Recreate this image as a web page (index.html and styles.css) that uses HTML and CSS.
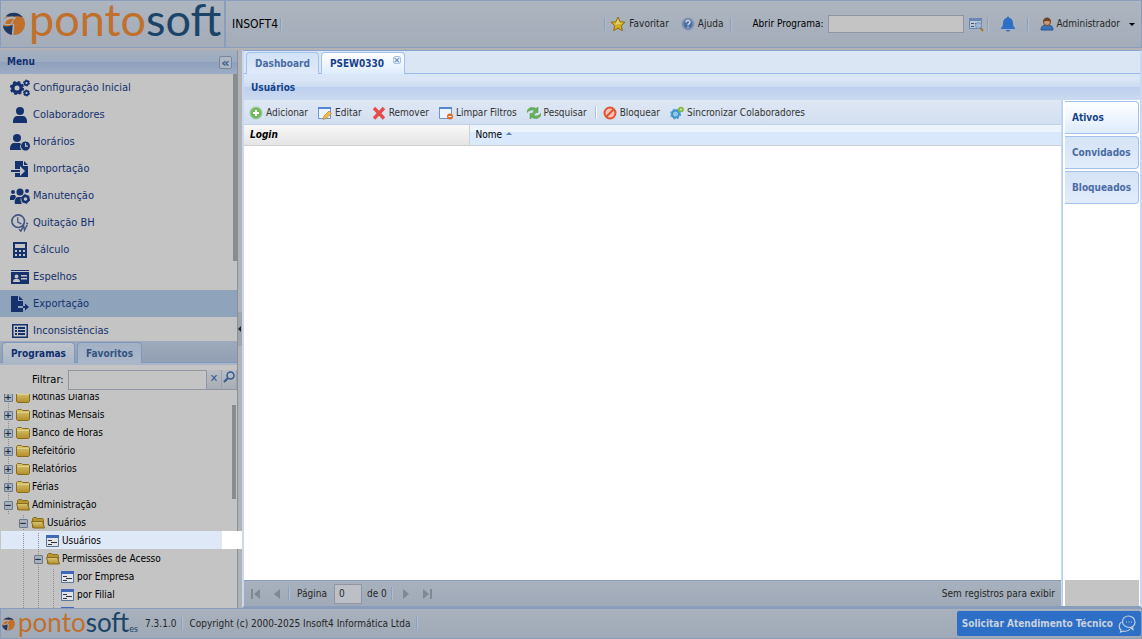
FILE: index.html
```html
<!DOCTYPE html>
<html lang="pt-BR">

<head>
    <meta charset="UTF-8">
    <meta name="viewport" content="width=device-width, initial-scale=1.0">
    <title>Pontosoft</title>
    <link rel="stylesheet" href="styles.css">
</head>

<body>
    <!-- icons -->
    <svg class="sprite" aria-hidden="true">
        <defs>
            <linearGradient id="gold" x1="0" y1="0" x2="0" y2="1">
                <stop offset="0" stop-color="#d9c873" />
                <stop offset="1" stop-color="#b38d2b" />
            </linearGradient>
        </defs>
        <symbol id="i-globe" viewBox="0 0 24 24">
            <circle cx="12" cy="12" r="11" fill="#c0702b" />
            <path d="M4 4A11 11 0 0 1 21 5.500C15 2.500 9 6 4 4z" fill="#1f3866" />
            <path d="M1 14c4 1 7 0 10-1 0 4-1 7-1 10C5 22 1.500 18 1 14z" fill="#1f3866" />
            <path d="M1.500 8c4-4 8-4 13-2.500-3 2-4 4-4 7-4 1-6 1-9.500 0z" fill="#a9b2be" />
            <path d="M4 9c3-2 5-2.500 8-2-2 1.500-2.500 3-2.500 4.500-2 .6-4 .6-6.500.3z" fill="#c0702b" />
            <path d="M11.500 12c0 4-.5 7-1 11" fill="none" stroke="#a9b2be" stroke-width="1.500" />
        </symbol>
        <symbol id="i-star" viewBox="0 0 16 16">
            <path d="M8 1l2.100 4.700 5 .5-3.800 3.400 1.100 5L8 12.200l-4.400 2.400 1.100-5L.9 6.200l5-.5z" fill="#d2ae22" stroke="#8f6f14" />
            <path d="M8 3l1.300 3.500 3 .4L5 9z" fill="#e4d06a" />
        </symbol>
        <symbol id="i-help" viewBox="0 0 14 14">
            <circle cx="7" cy="7" r="5.500" fill="#496d9f" stroke="#8094b4" stroke-width="2" />
            <path d="M5 5.500C5 3 9 3 9 5.300 9 6.600 7 6.500 7 8.200M7 9.500v1.300" fill="none" stroke="#d0d8e4" stroke-width="1.500" />
        </symbol>
        <symbol id="i-find" viewBox="0 0 16 16">
            <path d="M1.500 2.500h12v10h-12z" fill="#bdc7d4" stroke="#6a86b4" />
            <path d="M1 2h13v3H1z" fill="#6a86b4" />
            <path d="M3 7.500h3M3 10.500h3M7 7.500h5" stroke="#47536b" />
            <circle cx="10.500" cy="9.500" r="3" fill="#9db8d6" stroke="#7b92b5" />
            <path d="M12.500 12l2.500 3" stroke="#a6753a" stroke-width="2" />
        </symbol>
        <symbol id="i-bell" viewBox="0 0 14 16">
            <path d="M7 .5c.8 0 1 .7 1 1.300C10.800 2.400 12 4.500 12 7c0 3 1 4 2 5v1H0v-1c1-1 2-2 2-5 0-2.500 1.200-4.600 4-5.200C6 1.200 6.200.5 7 .5zM5 14h4c0 2-4 2-4 0z" fill="#2d6fc6" />
        </symbol>
        <symbol id="i-user" viewBox="0 0 14 14">
            <path d="M1 13c0-4 2-5 6-5s6 1 6 5z" fill="#3b71b8" stroke="#2a5592" />
            <circle cx="7" cy="5" r="3.500" fill="#c99a75" stroke="#7c4d26" />
            <path d="M3 5c0-6 8-6 8 0-2-1.500-6-1.500-8 0z" fill="#6f431e" />
        </symbol>
        <symbol id="m-cogs" viewBox="0 0 20 18">
            <circle cx="7" cy="9" r="4.200" fill="none" stroke="currentColor" stroke-width="3.400" />
            <circle cx="7" cy="9" r="6" fill="none" stroke="currentColor" stroke-width="2.200" stroke-dasharray="2.700 2" />
            <circle cx="16.500" cy="4" r="2" fill="none" stroke="currentColor" stroke-width="1.800" />
            <circle cx="16.500" cy="4" r="3" fill="none" stroke="currentColor" stroke-width="1" stroke-dasharray="1.600 1.540" />
            <circle cx="16.500" cy="14" r="2" fill="none" stroke="currentColor" stroke-width="1.800" />
            <circle cx="16.500" cy="14" r="3" fill="none" stroke="currentColor" stroke-width="1" stroke-dasharray="1.600 1.540" />
        </symbol>
        <symbol id="m-person" viewBox="0 0 20 18">
            <circle cx="10" cy="5" r="4" />
            <path d="M3 17v-2c0-3 2-5 4-5h6c2 0 4 2 4 5v2z" />
        </symbol>
        <symbol id="m-clock" viewBox="0 0 20 18">
            <circle cx="7" cy="5" r="4" />
            <path d="M0 17v-2c0-3 2-5 4-5h6l1 1c-1.500 2-1 4.500.5 6z" />
            <path fill-rule="evenodd" d="M15.500 8.500a4.500 4.500 0 1 0 .01 0zM15 10h1.200v2.500H18v1.300h-3z" />
        </symbol>
        <symbol id="m-import" viewBox="0 0 20 18">
            <path d="M5 1h8v5h5v11H5v-4h5v3l5-5-5-5v3H5zM14 1l4 4h-4z" />
            <path d="M1 10h9v2H1z" />
        </symbol>
        <symbol id="m-group" viewBox="0 0 20 18">
            <circle cx="3" cy="5" r="2" />
            <circle cx="10" cy="5" r="3.500" />
            <circle cx="17" cy="4" r="2" />
            <path d="M0 11c0-2 1-3 2-3h3l1 2-2 3H0zM5 17c-1-4 1-7 3-7h3c-1 3 0 6 1 7z" />
            <circle cx="15.500" cy="12" r="3" fill="none" stroke="currentColor" stroke-width="2.400" />
            <circle cx="15.500" cy="12" r="4.300" fill="none" stroke="currentColor" stroke-dasharray="2 2.500" />
        </symbol>
        <symbol id="m-history" viewBox="0 0 20 20">
            <g fill="none" stroke="currentColor" opacity=".75">
                <circle cx="8" cy="8" r="7" stroke-width="1.800" />
                <path d="M7.500 3.500V9l4 2" stroke-width="1.400" />
                <path d="M9 17l2 2 3-6 1 5 3-6M17 10l2 1" stroke-width="1.600" />
            </g>
        </symbol>
        <symbol id="m-calc" viewBox="0 0 20 18">
            <path fill-rule="evenodd" d="M3 1h14v16H3zM5 3v4h10V3zM5 9v2h2V9zM9 9v2h2V9zM13 9v2h2V9zM5 13v2h2v-2zM9 13v2h2v-2zM13 13v2h2v-2z" />
        </symbol>
        <symbol id="m-card" viewBox="0 0 20 18">
            <path fill-rule="evenodd" d="M1 2h18v1H1zM1 4h18v12H1zM11 7v1.500h6V7zM11 10v1.500h6V10zM3 14h7c0-2-1-3-2-3H5c-1 0-2 1-2 3zM6.500 6.500a2 2 0 1 0 .01 0z" />
        </symbol>
        <symbol id="m-export" viewBox="0 0 20 18">
            <path d="M1 1h7v5h5v5H8v2h5v4H1zM9 1l4 4H9zM13 11h2V8.500l4 3.500-4 3.500V13h-2z" />
        </symbol>
        <symbol id="m-list" viewBox="0 0 20 18">
            <path fill-rule="evenodd" d="M2 2h16v14H2zM3.500 3.500v11h13v-11zM5 5h2v2H5zM8 5h7v2H8zM5 8h2v2H5zM8 8h7v2H8zM5 11h2v2H5zM8 11h7v2H8z" />
        </symbol>
        <symbol id="t-folder" viewBox="0 0 14 14">
            <path d="M.5 2.500l1-1h4l1 1h6l1 1v8l-1 1h-11l-1-1z" fill="url(#gold)" stroke="#8a6c1d" />
            <path d="M1 4.500h12" stroke="#ded18c" />
        </symbol>
        <symbol id="t-open" viewBox="0 0 14 14">
            <path d="M1.500 2.500l1-1h3l1 1h5l1 1v8h-11z" fill="#b8962f" stroke="#8a6c1d" />
            <path d="M.5 5.500h11l2 6.500h-11z" fill="url(#gold)" stroke="#8a6c1d" />
        </symbol>
        <symbol id="t-form" viewBox="0 0 14 14">
            <path d="M.5 1.500h12v11H.5z" fill="#dfe4ec" stroke="#5d7397" />
            <path d="M0 1h13v3H0z" fill="#3f68b5" />
            <path d="M2 6.500h4M2 10.500h4M5 8.500h6" stroke="#333" />
        </symbol>
        <symbol id="b-add" viewBox="0 0 14 14">
            <circle cx="7" cy="7" r="6" fill="#6fba62" stroke="#a5c99f" />
            <path d="M7 4v6M4 7h6" stroke="#fff" stroke-width="2" />
        </symbol>
        <symbol id="b-edit" viewBox="0 0 14 14">
            <path d="M.5 1.500h12v11H.5z" fill="#eef4fc" stroke="#6a96d6" />
            <path d="M0 1h13v2H0z" fill="#5787d0" />
            <path d="M5 13.500l1-3.500 5-5 2.500 2.500-5.500 5z" fill="#f0bb4b" stroke="#b7842c" stroke-width=".7" />
        </symbol>
        <symbol id="b-remove" viewBox="0 0 14 14">
            <path d="M2 2l10 10.500M12 2L2 12.500" stroke="#e64d49" stroke-width="3.400" />
        </symbol>
        <symbol id="b-clear" viewBox="0 0 14 14">
            <path d="M.5 1.500h12v11H.5z" fill="#eef4fc" stroke="#6a96d6" />
            <path d="M0 1h13v2H0z" fill="#5787d0" />
            <circle cx="11" cy="10.500" r="3" fill="#e06a27" />
            <path d="M9.500 10.500h3" stroke="#fff" />
        </symbol>
        <symbol id="b-refresh" viewBox="0 0 14 14">
            <path d="M0 6.500C0 2 5 0 9 2.500L11 1v5.500H5.500L7.500 4.500C5 3.500 2.500 4 0 6.500zM14 7.500C14 12 9 14 5 11.500L3 13V7.500h5.500L6.500 9.500c2.500 1 5 .5 7.500-2z" fill="#67b05c" stroke="#4a9443" stroke-width=".5" />
        </symbol>
        <symbol id="b-block" viewBox="0 0 14 14">
            <circle cx="7" cy="7" r="5.500" fill="#f4c3b4" stroke="#e0532f" stroke-width="2" />
            <path d="M3.500 10.500l7-7" stroke="#e0532f" stroke-width="2" />
        </symbol>
        <symbol id="b-sync" viewBox="0 0 14 14">
            <circle cx="5.500" cy="8" r="3.500" fill="#8fcbe8" stroke="#3b92cb" stroke-width="2" />
            <circle cx="5.500" cy="8" r="5" fill="none" stroke="#3b92cb" stroke-dasharray="2 2" />
            <circle cx="11" cy="3.500" r="2" fill="#c7e28a" stroke="#7eb637" stroke-width="1.600" />
        </symbol>
        <symbol id="p-first" viewBox="0 0 14 14">
            <path d="M2 2h2v10H2zM11 2v10L5 7z" />
        </symbol>
        <symbol id="p-prev" viewBox="0 0 14 14">
            <path d="M10 2v10L4 7z" />
        </symbol>
        <symbol id="p-lens" viewBox="0 0 14 14">
            <circle cx="8.500" cy="5.500" r="3.500" fill="none" stroke="#31588f" stroke-width="1.500" />
            <path d="M6 8l-4 4" stroke="#31588f" stroke-width="2" />
        </symbol>
        <symbol id="i-chat" viewBox="0 0 18 18">
            <g fill="none" stroke="#c3cfdf" stroke-width="1.200">
                <path d="M12 12.500c3-.5 5-2.500 5-5.500 0-3.500-3-6-6.500-6S4.500 3.500 4.500 6.500s2.500 6 7.500 6l3 2-.5-3" />
                <path d="M3.500 7C.5 9 .5 13 3 15l-.5 2 3-1c3 .7 5 0 6.500-2" />
            </g>
            <path d="M8 7h1M10.500 7h1M13 7h1" stroke="#c3cfdf" />
        </symbol>
    </svg>

    <header class="topbar">
        <div class="brand">
            <svg class="brand-mark"><use href="#i-globe" /></svg>
            <span class="ponto">ponto</span><span class="soft">soft</span>
        </div>
        <span class="company">INSOFT4</span>
        <i class="sep"></i>
        <div class="top-tools">
            <i class="sep"></i>
            <button class="btn"><svg class="ico16"><use href="#i-star" /></svg>Favoritar</button>
            <button class="btn help"><svg><use href="#i-help" /></svg>Ajuda</button>
            <i class="sep"></i>
            <label for="open-program">Abrir Programa:</label>
            <input type="text" id="open-program">
            <button class="btn" aria-label="Localizar"><svg class="ico16"><use href="#i-find" /></svg></button>
            <i class="sep"></i>
            <button class="btn bell" aria-label="Avisos"><svg class="ico16"><use href="#i-bell" /></svg></button>
            <i class="sep"></i>
            <button class="btn account"><svg><use href="#i-user" /></svg>Administrador<i class="caret"></i></button>
        </div>
    </header>

    <div class="workspace">
        <aside class="sidebar">
            <div class="panel-title">Menu<button class="collapse" aria-label="Recolher">«</button></div>
            <nav class="menu">
                <a href="#"><svg><use href="#m-cogs" /></svg>Configuração Inicial</a>
                <a href="#"><svg><use href="#m-person" /></svg>Colaboradores</a>
                <a href="#"><svg><use href="#m-clock" /></svg>Horários</a>
                <a href="#"><svg><use href="#m-import" /></svg>Importação</a>
                <a href="#"><svg><use href="#m-group" /></svg>Manutenção</a>
                <a href="#"><svg><use href="#m-history" /></svg>Quitação BH</a>
                <a href="#"><svg><use href="#m-calc" /></svg>Cálculo</a>
                <a href="#"><svg><use href="#m-card" /></svg>Espelhos</a>
                <a href="#" class="selected"><svg><use href="#m-export" /></svg>Exportação</a>
                <a href="#"><svg><use href="#m-list" /></svg>Inconsistências</a>
                <i class="thumb"></i>
            </nav>
            <section class="programs">
                <div class="side-tabs">
                    <button class="active">Programas</button>
                    <button>Favoritos</button>
                </div>
                <div class="filter">
                    <label for="filter">Filtrar:</label>
                    <input type="text" id="filter">
                    <button aria-label="Limpar">✕</button>
                    <button aria-label="Buscar"><svg><use href="#p-lens" /></svg></button>
                </div>
                <div class="tree">
                    <ul>
                        <li><i class="box plus"></i><svg><use href="#t-folder" /></svg>Rotinas Diárias</li>
                        <li><i class="box plus"></i><svg><use href="#t-folder" /></svg>Rotinas Mensais</li>
                        <li><i class="box plus"></i><svg><use href="#t-folder" /></svg>Banco de Horas</li>
                        <li><i class="box plus"></i><svg><use href="#t-folder" /></svg>Refeitório</li>
                        <li><i class="box plus"></i><svg><use href="#t-folder" /></svg>Relatórios</li>
                        <li><i class="box plus"></i><svg><use href="#t-folder" /></svg>Férias</li>
                        <li><i class="box"></i><svg><use href="#t-open" /></svg>Administração</li>
                        <li><i></i><i class="box"></i><svg><use href="#t-open" /></svg>Usuários</li>
                        <li class="selected"><i></i><i></i><i class="line"></i><svg><use href="#t-form" /></svg>Usuários</li>
                        <li><i></i><i class="line"></i><i class="box"></i><svg><use href="#t-open" /></svg>Permissões de Acesso</li>
                        <li><i></i><i class="line"></i><i class="line"></i><i class="line"></i><svg><use href="#t-form" /></svg>por Empresa</li>
                        <li><i></i><i class="line"></i><i class="line"></i><i class="line"></i><svg><use href="#t-form" /></svg>por Filial</li>
                        <li><i></i><i class="line"></i><i class="line"></i><i class="line"></i><svg><use href="#t-form" /></svg></li>
                    </ul>
                    <i class="thumb"></i>
                </div>
            </section>
        </aside>

        <div class="splitter"><button aria-label="Recolher menu"></button></div>

        <main class="content">
            <div class="main-tabs">
                <button>Dashboard</button>
                <button class="active">PSEW0330<i class="close">×</i></button>
            </div>
            <h1>Usuários</h1>
            <div class="columns">
                <section class="grid-panel">
                    <div class="toolbar">
                        <button class="btn"><svg><use href="#b-add" /></svg>Adicionar</button>
                        <button class="btn"><svg><use href="#b-edit" /></svg>Editar</button>
                        <button class="btn"><svg><use href="#b-remove" /></svg>Remover</button>
                        <button class="btn"><svg><use href="#b-clear" /></svg>Limpar Filtros</button>
                        <button class="btn"><svg><use href="#b-refresh" /></svg>Pesquisar</button>
                        <i class="sep"></i>
                        <button class="btn"><svg><use href="#b-block" /></svg>Bloquear</button>
                        <button class="btn"><svg><use href="#b-sync" /></svg>Sincronizar Colaboradores</button>
                    </div>
                    <div class="grid-body">
                        <table>
                            <thead>
                                <tr>
                                    <th class="login">Login</th>
                                    <th class="name">Nome<i class="sort"></i></th>
                                </tr>
                            </thead>
                            <tbody></tbody>
                        </table>
                    </div>
                    <div class="paging">
                        <button aria-label="Primeira"><svg><use href="#p-first" /></svg></button>
                        <button aria-label="Anterior"><svg><use href="#p-prev" /></svg></button>
                        <i class="sep"></i>
                        <label for="page">Página</label>
                        <input type="text" id="page" value="0">
                        <span>de 0</span>
                        <i class="sep"></i>
                        <button class="flip" aria-label="Próxima"><svg><use href="#p-prev" /></svg></button>
                        <button class="flip" aria-label="Última"><svg><use href="#p-first" /></svg></button>
                        <span class="empty">Sem registros para exibir</span>
                    </div>
                </section>
                <div class="status-tabs">
                    <button class="active">Ativos</button>
                    <button>Convidados</button>
                    <button>Bloqueados</button>
                    <div class="shade"></div>
                </div>
            </div>
        </main>
    </div>

    <footer class="bottombar">
        <div class="brand small">
            <svg class="brand-mark"><use href="#i-globe" /></svg>
            <span class="ponto">ponto</span><span class="soft">soft</span><sub>es</sub>
        </div>
        <span>7.3.1.0</span>
        <i class="sep"></i>
        <span>Copyright (c) 2000-2025 Insoft4 Informática Ltda</span>
        <i class="sep"></i>
        <button class="support">Solicitar Atendimento Técnico<svg><use href="#i-chat" /></svg></button>
    </footer>
</body>

</html>
```
FILE: styles.css
```css
*,
::before,
::after {
    margin: 0;
    padding: 0;
    box-sizing: border-box;
}

body {
    display: flex;
    flex-direction: column;
    height: 100vh;
    overflow: hidden;
    background: #b3b3b3;
    font: 10px/14px Tahoma, "DejaVu Sans Condensed", "DejaVu Sans", sans-serif;
    color: #000;
}

button,
input {
    font: inherit;
    color: inherit;
    border: 0;
    background: none;
    white-space: nowrap;
}

svg {
    flex: none;
    width: 14px;
    height: 14px;
}

i {
    font-style: normal;
}

.sprite {
    position: absolute;
    width: 0;
    height: 0;
}

.ico16 {
    width: 16px;
    height: 16px;
}

.btn {
    display: flex;
    align-items: center;
    gap: 3px;
    color: #262626;
}

.sep {
    flex: none;
    width: 2px;
    height: 13px;
    background: #86a0c6;
    border-right: 1px solid #b5bcc6;
}

/* top bar */

.topbar {
    display: flex;
    align-items: center;
    flex: none;
    height: 48px;
    border: 1px solid #8a9dbb;
    background: linear-gradient(#adb5c0, #a3acb9);
}

.brand {
    display: flex;
    align-items: center;
    flex: none;
    width: 225px;
    height: 46px;
    padding-bottom: 10px;
    border-right: 2px solid #8a9dbb;
    font: 45px/56px Lato, sans-serif;
}

.brand-mark {
    width: 26px;
    height: 24px;
    margin: 10px 2px 0 0;
}

.ponto {
    color: #c0702b;
}

.soft {
    color: #1b4468;
}

.company {
    margin: 0 2px 0 6px;
    font-size: 12px;
}

.top-tools {
    display: flex;
    align-items: center;
    margin-left: auto;
    padding-right: 6px;
}

.top-tools .btn {
    margin-left: 4px;
}

.top-tools .help {
    margin: 0 7px 0 12px;
}

.top-tools label {
    margin: 0 4px 0 20px;
}

.top-tools input {
    width: 136px;
    height: 18px;
    border: 1px solid #8f95a3;
    background: #c4c4c4;
}

.top-tools input + .btn {
    margin-right: 3px;
}

.top-tools .bell {
    margin: 0 11px;
}

.top-tools .account {
    margin-left: 11px;
}

.caret {
    margin-left: 6px;
    border: 3px solid transparent;
    border-top-color: #000;
    border-bottom: 0;
}

/* workspace */

.workspace {
    display: flex;
    flex: 1;
    min-height: 0;
    padding-top: 2px;
}

.sidebar {
    display: flex;
    flex-direction: column;
    flex: none;
    width: 238px;
    border-right: 1px solid #8290ab;
    background: #c4c4c4;
}

.panel-title {
    display: flex;
    align-items: center;
    justify-content: space-between;
    flex: none;
    height: 24px;
    padding: 0 5px 0 7px;
    background: linear-gradient(#a5afbe, #9cabc2 50%, #8fa0bd 50%, #9dacc3);
    font-weight: bold;
    color: #112f70;
}

.collapse {
    width: 13px;
    height: 13px;
    border: 1px solid #76869f;
    border-radius: 2px;
    background: #acb6c5;
    font: bold 13px/9px "DejaVu Sans", sans-serif;
    color: #3c5d8a;
}

.menu {
    position: relative;
    flex: 1;
    min-height: 0;
    overflow: hidden;
}

.menu a {
    display: flex;
    align-items: center;
    gap: 3px;
    height: 27px;
    padding: 1px 0 0 10px;
    font-size: 11px;
    color: #15316e;
    text-decoration: none;
}

.menu svg {
    width: 20px;
    height: 18px;
    fill: #15316e;
}

.menu .selected {
    background: #8fa3bb;
}

.thumb {
    position: absolute;
    top: 0;
    right: 0;
    width: 4px;
    height: 70%;
    background: #8b8b8b;
}

.programs {
    display: flex;
    flex-direction: column;
    flex: 1;
    min-height: 0;
}

.side-tabs {
    display: flex;
    gap: 2px;
    flex: none;
    height: 24px;
    padding: 1px 2px 0;
    border-bottom: 2px solid #aab6c8;
    background: linear-gradient(#9eaabb, #929fb3);
    box-shadow: inset 0 -1px #7f98bd;
}

.side-tabs button {
    padding: 1px 8px 0;
    border: 1px solid #7f98bd;
    border-bottom: 0;
    border-radius: 4px 4px 0 0;
    background: linear-gradient(#a3b1c5, #aab7ca);
    font-weight: bold;
    color: #33527f;
}

.side-tabs .active {
    background: linear-gradient(#bfc4ca, #aab6c8);
    color: #112f70;
}

.filter {
    display: flex;
    align-items: center;
    flex: none;
    height: 29px;
    padding-left: 32px;
    font-size: 11px;
}

.filter input {
    flex: 1;
    min-width: 0;
    height: 20px;
    margin-left: 4px;
    border: 1px solid #8f95a3;
}

.filter button {
    width: 15px;
    height: 20px;
    border-right: 1px solid #9aa0ac;
    border-bottom: 1px solid #8f95a3;
    background: linear-gradient(#b9bdc3, #a8adb6);
    color: #31588f;
}

.tree {
    position: relative;
    flex: 1;
    min-height: 0;
    overflow-x: visible;
    overflow-y: clip;
}

.tree ul {
    margin-top: -7px;
    padding-left: 1px;
    list-style: none;
}

.tree li {
    position: relative;
    display: flex;
    align-items: center;
    width: 221px;
    height: 18px;
    padding-top: 1px;
    white-space: nowrap;
}

.tree li svg {
    margin-right: 2px;
}

.tree li i {
    position: relative;
    flex: none;
    width: 15px;
    height: 18px;
    background: repeating-linear-gradient(transparent 0 1px, #8d8d8d 1px 2px) 7px 0 / 1px 100% no-repeat;
}

.tree li i:first-child:not(.box) {
    background: none;
}

.tree .box::before {
    content: '−';
    position: absolute;
    top: 5px;
    left: 3px;
    width: 9px;
    height: 9px;
    border: 1px solid #68788f;
    border-radius: 1px;
    background: #a8b0bb;
    font: bold 9px/7px "DejaVu Sans", sans-serif;
    text-align: center;
    text-indent: -1px;
    color: #1f2d45;
}

.tree .plus::before {
    content: '+';
}

.tree .selected {
    background: #dfe8f6;
}

/* the selected row runs on over the scrollbar and the splitter */
.tree .selected::after {
    content: '';
    position: absolute;
    top: 0;
    left: 100%;
    z-index: 2;
    width: 20px;
    height: 18px;
    background: #fff;
}

.tree .thumb {
    top: 5%;
    right: 1px;
    height: 44%;
}

.splitter {
    display: flex;
    align-items: center;
    flex: none;
    width: 4px;
    background: #b3b3b3;
}

.splitter button {
    width: 4px;
    height: 34px;
    background: #a5a5a5;
}

.splitter button::before {
    content: '';
    display: block;
    width: 3px;
    border: 3px solid transparent;
    border-right-color: #222;
    border-left: 0;
}

/* content */

.content {
    display: flex;
    flex-direction: column;
    flex: 1;
    min-width: 0;
    border: 2px solid #c6d8f2;
    border-top: 1px solid #8aa3cd;
    border-bottom-color: #8a9dbb;
    background: #fff;
}

.main-tabs {
    display: flex;
    gap: 2px;
    flex: none;
    height: 28px;
    padding: 1px 2px 0;
    border-bottom: 5px solid #d9e6f7;
    background: #dbe6f5;
    box-shadow: inset 0 -1px #99bbe8;
}

.main-tabs button {
    position: relative;
    padding: 1px 8px 0;
    border: 1px solid #a3c1ec;
    border-bottom: 0;
    border-radius: 4px 4px 0 0;
    background: linear-gradient(#d2e1f5, #e0eafa);
    font-weight: bold;
    color: #4a6ca5;
}

.main-tabs .active {
    padding-right: 20px;
    background: linear-gradient(#fff, #deecfd);
    color: #15428b;
}

.close {
    position: absolute;
    top: 3px;
    right: 3px;
    width: 8px;
    height: 8px;
    border: 1px solid #a9c1e6;
    border-radius: 2px;
    font: bold 9px/6px "DejaVu Sans", sans-serif;
    text-indent: -1px;
    color: #6d8fc4;
}

h1 {
    flex: none;
    height: 21px;
    padding-left: 7px;
    background: linear-gradient(#dbe6f5, #ccdbf1 40%, #bdd0ef 40%, #cbdaf0);
    font-size: 10px;
    line-height: 18px;
    color: #15428b;
}

.columns {
    display: flex;
    flex: 1;
    min-height: 0;
}

.grid-panel {
    display: flex;
    flex-direction: column;
    flex: 1;
    min-width: 0;
    border-right: 1px solid #c6d8f2;
}

.toolbar {
    display: flex;
    align-items: center;
    gap: 10px;
    flex: none;
    height: 25px;
    padding: 1px 0 0 5px;
    border-bottom: 1px solid #c0d0e8;
    background: linear-gradient(#dfe7f4, #d2dff0);
}

.toolbar .btn {
    color: #333;
}

.toolbar .sep {
    margin: 0 -4px 0 -2px;
    background: #a5c6f3;
    border-color: #fff;
}

.grid-body {
    flex: 1;
}

table {
    width: 100%;
    table-layout: fixed;
    border-collapse: collapse;
}

th {
    height: 20px;
    padding: 0 6px;
    border-bottom: 1px solid #d0d0d0;
    font-weight: normal;
    text-align: left;
}

.login {
    width: 225px;
    border-right: 1px solid #d0d0d0;
    background: linear-gradient(#f8f8f8, #e5e4e4);
    font-weight: bold;
    font-style: italic;
}

.name {
    background: linear-gradient(#ebf3fd 35%, #d9e8fb 35%);
}

.sort {
    display: inline-block;
    margin: 0 0 3px 4px;
    border: 3px solid transparent;
    border-top: 0;
    border-bottom-color: #5a82bc;
}

.paging {
    display: flex;
    align-items: center;
    flex: none;
    height: 26px;
    padding: 0 6px 0 5px;
    border-top: 1px solid #8a9dbb;
    background: linear-gradient(#a8b1bd, #9fa9b8);
    color: #262626;
}

.paging button {
    height: 14px;
}

.paging button + button {
    margin-left: 7px;
}

.paging svg {
    fill: #808893;
}

.paging label {
    margin: 0 7px;
}

.paging input {
    width: 28px;
    height: 20px;
    margin-right: 5px;
    padding-left: 4px;
    border: 1px solid #8f95a3;
    background: #bcc0c6;
}

.paging .sep {
    margin-left: 4px;
}

.paging .flip {
    transform: scaleX(-1);
}

.paging .sep + .flip {
    margin-left: 6px;
}

.paging .empty {
    margin-left: auto;
}

.status-tabs {
    display: flex;
    flex-direction: column;
    gap: 2px;
    flex: none;
    width: 78px;
    padding: 1px 1px 0 2px;
    border-left: 1px solid #b5cef3;
}

.status-tabs button {
    height: 33px;
    padding: 1px 0 0 7px;
    border: 1px solid #a3c1ec;
    border-left: 0;
    border-radius: 0 4px 4px 0;
    background: linear-gradient(#d5e3f6, #e2ecfb);
    font-weight: bold;
    text-align: left;
    color: #4a6ca5;
}

.status-tabs .active {
    background: linear-gradient(#fff, #deecfd);
    color: #15428b;
}

.shade {
    height: 26px;
    margin-top: auto;
    background: #c4c4c4;
}

/* bottom bar */

.bottombar {
    display: flex;
    align-items: center;
    flex: none;
    height: 31px;
    border: 1px solid #8a9dbb;
    background: linear-gradient(#a8b1bd, #a0aab7);
    color: #262626;
}

.small {
    width: 144px;
    height: 29px;
    padding-bottom: 4px;
    border: 0;
    font-size: 26px;
    line-height: 32px;
}

.small .brand-mark {
    width: 15px;
    height: 14px;
    margin-top: 4px;
}

.small sub {
    align-self: flex-end;
    font-size: 9px;
    line-height: 10px;
    color: #1b4468;
}

.bottombar > .sep {
    margin: 0 6px 0 5px;
}

.support {
    display: flex;
    align-items: center;
    gap: 5px;
    height: 25px;
    margin-left: auto;
    padding: 0 5px;
    border-radius: 2px;
    background: #2d6fc6;
    font-weight: bold;
    color: #c9d2de;
}

.support svg {
    width: 18px;
    height: 18px;
}
```
